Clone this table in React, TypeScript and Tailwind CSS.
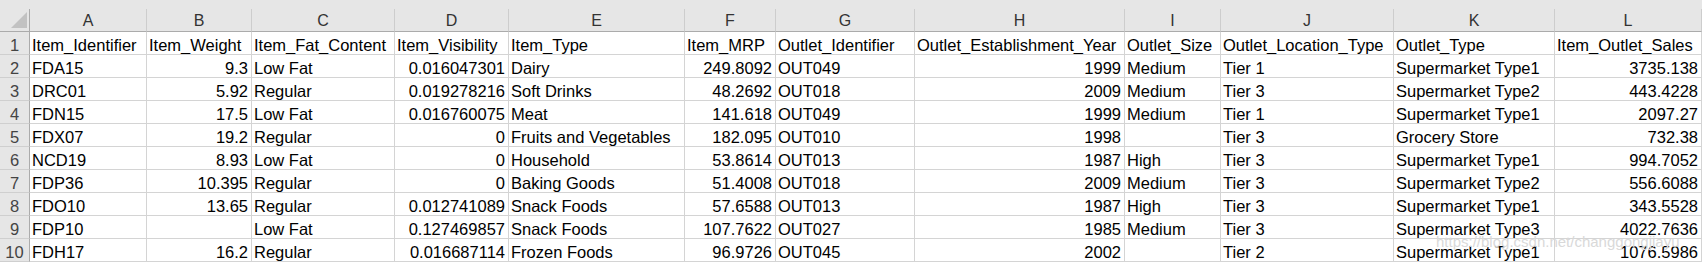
const cols = ["A", "B", "C", "D", "E", "F", "G", "H", "I", "J", "K", "L"];

// columns holding numbers are right aligned
const numeric = [false, true, false, true, false, true, false, true, false, false, false, true];

const header = [
  "Item_Identifier",
  "Item_Weight",
  "Item_Fat_Content",
  "Item_Visibility",
  "Item_Type",
  "Item_MRP",
  "Outlet_Identifier",
  "Outlet_Establishment_Year",
  "Outlet_Size",
  "Outlet_Location_Type",
  "Outlet_Type",
  "Item_Outlet_Sales",
];

const rows = [
  ["FDA15", "9.3", "Low Fat", "0.016047301", "Dairy", "249.8092", "OUT049", "1999", "Medium", "Tier 1", "Supermarket Type1", "3735.138"],
  ["DRC01", "5.92", "Regular", "0.019278216", "Soft Drinks", "48.2692", "OUT018", "2009", "Medium", "Tier 3", "Supermarket Type2", "443.4228"],
  ["FDN15", "17.5", "Low Fat", "0.016760075", "Meat", "141.618", "OUT049", "1999", "Medium", "Tier 1", "Supermarket Type1", "2097.27"],
  ["FDX07", "19.2", "Regular", "0", "Fruits and Vegetables", "182.095", "OUT010", "1998", "", "Tier 3", "Grocery Store", "732.38"],
  ["NCD19", "8.93", "Low Fat", "0", "Household", "53.8614", "OUT013", "1987", "High", "Tier 3", "Supermarket Type1", "994.7052"],
  ["FDP36", "10.395", "Regular", "0", "Baking Goods", "51.4008", "OUT018", "2009", "Medium", "Tier 3", "Supermarket Type2", "556.6088"],
  ["FDO10", "13.65", "Regular", "0.012741089", "Snack Foods", "57.6588", "OUT013", "1987", "High", "Tier 3", "Supermarket Type1", "343.5528"],
  ["FDP10", "", "Low Fat", "0.127469857", "Snack Foods", "107.7622", "OUT027", "1985", "Medium", "Tier 3", "Supermarket Type3", "4022.7636"],
  ["FDH17", "16.2", "Regular", "0.016687114", "Frozen Foods", "96.9726", "OUT045", "2002", "", "Tier 2", "Supermarket Type1", "1076.5986"],
];

const grid =
  "grid grid-cols-[30px_117px_105px_143px_114px_176px_91px_139px_210px_96px_173px_161px_1fr]";

function Cell({ value, right }: { value: string; right?: boolean }) {
  return (
    <div
      className={
        "h-[23px] border-r border-b border-[#d4d4d4] flex items-end overflow-hidden whitespace-nowrap leading-[18px] " +
        (right ? "justify-end pr-[3px]" : "pl-[2px]")
      }
    >
      {value}
    </div>
  );
}

function RowHead({ n }: { n: number }) {
  return (
    <div className="h-[23px] bg-[#e6e6e6] border-r border-r-[#ababab] border-b border-b-[#cfcfcf] flex items-end justify-center leading-[18px] text-[#444]">
      {n}
    </div>
  );
}

export default function App() {
  return (
    <div className="relative w-[1702px] h-[262px] overflow-hidden bg-white text-[16.5px] text-black font-['Liberation_Sans',Arial,sans-serif]">
      <div className="h-[9px] bg-[#e6e6e6]" />

      <div className={grid}>
        {/* corner */}
        <div className="h-[23px] bg-[#e6e6e6] border-r border-b border-[#ababab] relative">
          <svg className="absolute left-[11px] top-[3px]" width="16" height="16" viewBox="0 0 16 16">
            <polygon points="16,0 16,16 0,16" fill="#c2c2c2" />
          </svg>
        </div>
        {cols.map((c) => (
          <div
            key={c}
            className="h-[23px] bg-[#e6e6e6] border-r border-r-[#cdcdcd] border-b border-b-[#ababab] flex items-end justify-center leading-[20px] text-[16px] text-[#333]"
          >
            {c}
          </div>
        ))}

        <RowHead n={1} />
        {header.map((h, i) => (
          <Cell key={i} value={h} />
        ))}

        {rows.map((r, ri) => (
          <>
            <RowHead key={"h" + ri} n={ri + 2} />
            {r.map((v, ci) => (
              <Cell key={ri + "-" + ci} value={v} right={numeric[ci]} />
            ))}
          </>
        ))}
      </div>

      {/* blog watermark over the bottom right corner */}
      <div className="absolute left-[1436px] top-[231px] text-[15px] text-[#d9d9d9] whitespace-nowrap font-['Liberation_Sans',Arial,sans-serif] pointer-events-none">
        https://blog.csdn.net/changgongjiayu
      </div>
    </div>
  );
}
